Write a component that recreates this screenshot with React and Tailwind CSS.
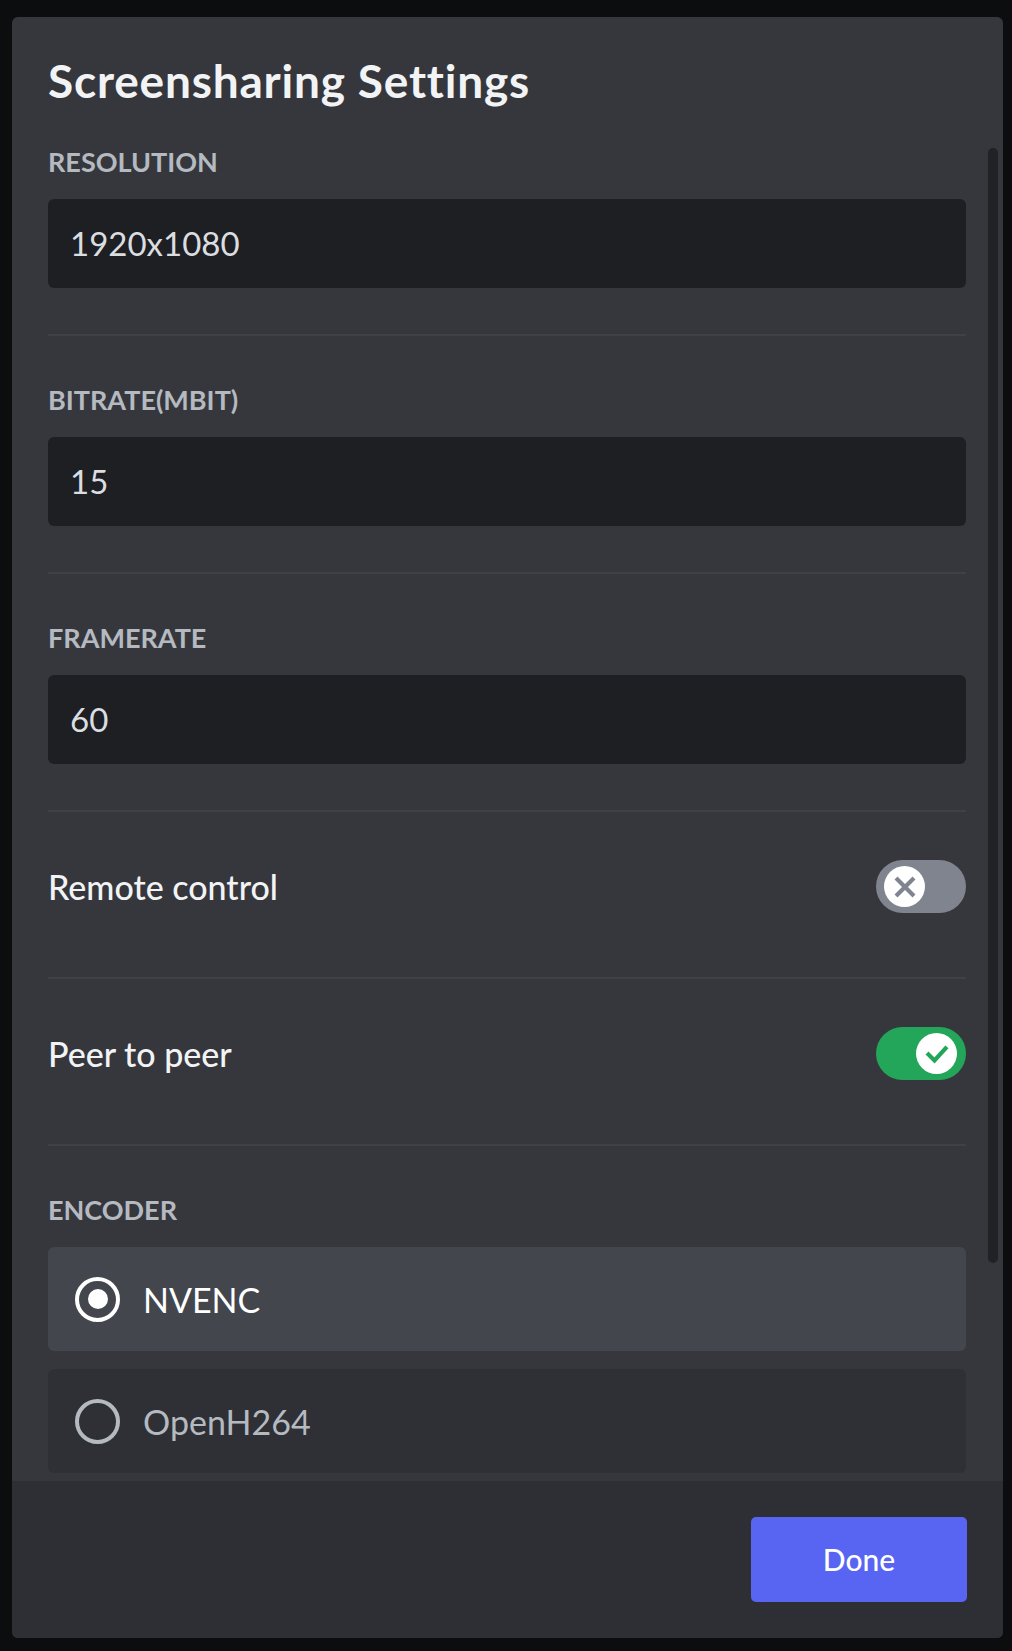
import React, { useState } from 'react'

const font = { fontFamily: 'Lato, "Noto Sans", sans-serif' }

const Field = ({ label, value, first }) => (
  <div className={first ? 'pt-[38px]' : 'pt-[48px]'}>
    <div className="text-[27px] leading-[32px] font-bold text-[#b5bac1] uppercase">{label}</div>
    <div className="mt-[21px] h-[89px] rounded-[6px] bg-[#1e1f22] flex items-center pl-[22px] text-[33px] text-[#dbdee1]">
      {value}
    </div>
    <div className="mt-[46px] h-[2px] bg-[#3f4147]" />
  </div>
)

const Toggle = ({ on, onClick }) => (
  <button
    onClick={onClick}
    className={`w-[90px] h-[53px] rounded-full flex items-center ${
      on ? 'bg-[#23a55a] justify-end pr-[9px]' : 'bg-[#80848e] justify-start pl-[8px]'
    }`}
  >
    <span className="w-[41px] h-[41px] rounded-full bg-white flex items-center justify-center">
      {on ? (
        <svg width="28" height="28" viewBox="0 0 28 28">
          <path d="M5.5 14.5l6 6 11-12" fill="none" stroke="#23a55a" strokeWidth="4.2" strokeLinecap="square" strokeLinejoin="miter" />
        </svg>
      ) : (
        <svg width="24" height="24" viewBox="0 0 24 24">
          <path d="M4.5 4.5l15 15M19.5 4.5l-15 15" fill="none" stroke="#80848e" strokeWidth="4.2" strokeLinecap="square" />
        </svg>
      )}
    </span>
  </button>
)

const SwitchRow = ({ label, on, onClick }) => (
  <div className="pt-[48px]">
    <div className="h-[53px] flex items-center justify-between">
      <span className="text-[34px] font-medium text-[#f2f3f5]">{label}</span>
      <Toggle on={on} onClick={onClick} />
    </div>
    <div className="mt-[64px] h-[2px] bg-[#3f4147]" />
  </div>
)

const Radio = ({ label, selected, onClick, first }) => (
  <div
    onClick={onClick}
    className={`h-[104px] rounded-[6px] flex items-center pl-[27px] gap-[23px] cursor-pointer ${
      first ? 'mt-[21px]' : 'mt-[18px]'
    } ${selected ? 'bg-[#43464d]' : 'bg-[#2e3035]'}`}
  >
    <span
      className={`w-[45px] h-[45px] rounded-full border-[4px] flex items-center justify-center ${
        selected ? 'border-white' : 'border-[#b5bac1]'
      }`}
    >
      {selected && <span className="w-[20px] h-[20px] rounded-full bg-white" />}
    </span>
    <span className={`text-[34px] ${selected ? 'text-white' : 'text-[#b5bac1]'}`}>{label}</span>
  </div>
)

const App = () => {
  const [remote, setRemote] = useState(false)
  const [p2p, setP2p] = useState(true)
  const [encoder, setEncoder] = useState('NVENC')

  return (
    <div className="min-h-[1651px] bg-[#0c0d0f] pt-[17px] pl-[12px]" style={font}>
      <div className="w-[991px] h-[1621px] bg-[#36373d] rounded-[6px] flex flex-col overflow-hidden">
        <div className="h-[91px] pt-[37px] pl-[36px]">
          <h1 className="text-[46px] leading-[54px] font-bold tracking-[0.8px] text-[#f2f3f5]">Screensharing Settings</h1>
        </div>

        <div className="flex-1 min-h-0 flex overflow-hidden">
          <div className="w-[918px] ml-[36px] pb-[8px]">
            <Field first label="Resolution" value="1920x1080" />
            <Field label="Bitrate(Mbit)" value="15" />
            <Field label="Framerate" value="60" />
            <SwitchRow label="Remote control" on={remote} onClick={() => setRemote(!remote)} />
            <SwitchRow label="Peer to peer" on={p2p} onClick={() => setP2p(!p2p)} />
            <div className="pt-[48px]">
              <div className="text-[27px] leading-[32px] font-bold text-[#b5bac1]">ENCODER</div>
              {['NVENC', 'OpenH264'].map((e, i) => (
                <Radio key={e} first={i === 0} label={e} selected={encoder === e} onClick={() => setEncoder(e)} />
              ))}
            </div>
          </div>
          <div className="ml-[22px] mt-[40px] w-[10px] h-[1115px] rounded-full bg-[#202225]" />
        </div>

        <div className="h-[157px] bg-[#2e2f34] flex items-center justify-end pr-[36px]">
          <button className="w-[216px] h-[85px] rounded-[5px] bg-[#5865f2] text-white text-[30px] font-medium">
            Done
          </button>
        </div>
      </div>
    </div>
  )
}

export default App
